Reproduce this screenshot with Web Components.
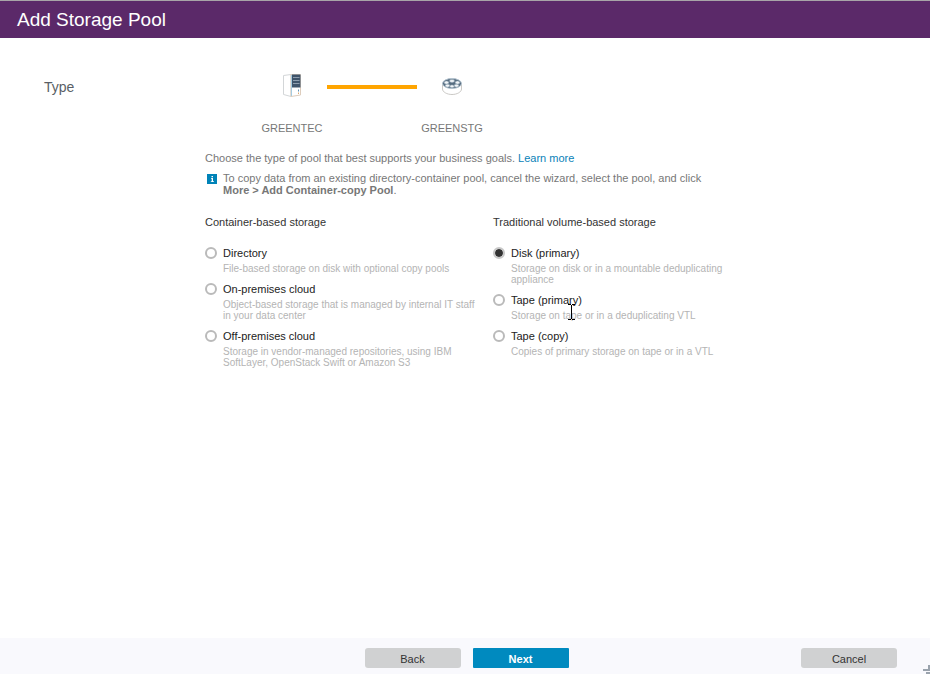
<!DOCTYPE html>
<html lang="en">
<head>
  <meta charset="utf-8">
  <meta name="viewport" content="width=device-width, initial-scale=1">
  <title>Add Storage Pool</title>
  <style>
    body {
      margin: 0;
      background: #fff;
      font-family: "Liberation Sans", Arial, sans-serif;
      font-size: 11px;
      line-height: 12px;
      color: #777;
    }
  </style>
</head>
<body>
  <wizard-dialog heading="Add Storage Pool" step="Type">
    <step-tracker>
      <tracker-node icon="server">GREENTEC</tracker-node>
      <tracker-line></tracker-line>
      <tracker-node icon="pool">GREENSTG</tracker-node>
    </step-tracker>
    <intro-text>Choose the type of pool that best supports your business goals. <help-link href="#learn">Learn more</help-link></intro-text>
    <info-note>To copy data from an existing directory-container pool, cancel the wizard, select the pool, and click <b>More &gt; Add Container-copy Pool</b>.</info-note>
    <pool-picker></pool-picker>
    <wizard-button slot="nav">Back</wizard-button>
    <wizard-button slot="nav" primary>Next</wizard-button>
    <wizard-button slot="end">Cancel</wizard-button>
  </wizard-dialog>
  <text-cursor></text-cursor>

  <script>
    class WizardDialog extends HTMLElement {

      constructor() {
        super();
        this.shadowDOM = this.attachShadow({ mode: 'open' });
      }

      connectedCallback() {
        this.render();
      }

      render() {
        this.shadowDOM.innerHTML = `
          <style>
          * {
            box-sizing: border-box;
          }

          :host {
            display: flex;
            flex-direction: column;
            min-height: 100vh;
          }

          header {
            padding: 8px 17px 7px;
            border-top: 1px solid #a8a4a8;
            background: #5b2969;
          }

          h1 {
            margin: 0;
            font-size: 19px;
            line-height: 22px;
            font-weight: 400;
            color: #fff;
          }

          main {
            flex: 1;
            display: grid;
            grid-template-columns: 161px minmax(0, 576px);
            align-content: start;
            padding: 34px 44px;
          }

          h2 {
            margin: 6px 0 0;
            font-size: 14px;
            line-height: 18px;
            font-weight: 400;
            color: #5a5f66;
          }

          footer {
            position: relative;
            display: grid;
            grid-template-columns: 1fr auto 1fr;
            align-items: center;
            padding: 10px 33px 6px 36px;
            background: #f9f9fd;
          }

          .nav {
            grid-column: 2;
            display: flex;
            gap: 12px;
          }

          .end {
            justify-self: end;
          }

          .grip {
            position: absolute;
            right: 0;
            bottom: 0;
          }
          </style>

          <header><h1>${this.getAttribute('heading')}</h1></header>
          <main>
            <h2>${this.getAttribute('step')}</h2>
            <section><slot></slot></section>
          </main>
          <footer>
            <div class="nav"><slot name="nav"></slot></div>
            <div class="end"><slot name="end"></slot></div>
            <svg class="grip" width="7" height="9" viewBox="0 0 7 9" fill="none" stroke="#9aa3ad" stroke-width="2">
              <path d="M0 5h6V0M3 8h4"/>
            </svg>
          </footer>
        `;
      }
    }

    class StepTracker extends HTMLElement {

      constructor() {
        super();
        this.shadowDOM = this.attachShadow({ mode: 'open' });
      }

      connectedCallback() {
        this.shadowDOM.innerHTML = `
          <style>
          :host {
            display: flex;
            align-items: flex-start;
            padding-left: 52px;
            margin-bottom: 18px;
          }
          </style>
          <slot></slot>
        `;
      }
    }

    const trackerIcons = {
      server: `
        <svg width="28" height="28" viewBox="0 0 28 28" fill="none">
          <path d="M5.500 3.500L13 2.500V24.500L5.500 22.500Z" fill="#fff" stroke="#d3d6d8"/>
          <path d="M13 2.500H22.500V23L13 24.500Z" fill="#fff" stroke="#decdbd"/>
          <path d="M13.500 3V24" stroke="#a5cbe0"/>
          <path d="M14 2.500H22.500V15.500H14Z" fill="#3f546b"/>
          <path d="M15 5.500h6.500M15 8.500h6.500M15 11.500h6.500" stroke="#8d9dae"/>
          <path d="M20.500 17.500v2" stroke="#5f91b5"/>
          <path d="M20.500 20.500v1.500" stroke="#dda970"/>
        </svg>`,
      pool: `
        <svg width="28" height="28" viewBox="0 0 28 28" fill="none">
          <path d="M4.500 12.500v4.500c0 3 4.500 5.500 9.500 5.500s9.500-2.500 9.500-5.500v-4.500" fill="#fff" stroke="#cbc9c6"/>
          <ellipse cx="14" cy="11.500" rx="9.500" ry="5" fill="#566c80" stroke="#b3c3cf"/>
          <g fill="#f1f5f8" stroke="#93a6b5" stroke-width=".5">
            <ellipse cx="8.500" cy="10.500" rx="2.300" ry="1.500"/>
            <ellipse cx="14" cy="9" rx="2.500" ry="1.400"/>
            <ellipse cx="19.500" cy="10.500" rx="2.300" ry="1.500"/>
            <ellipse cx="9.500" cy="13.700" rx="2.300" ry="1.400"/>
            <ellipse cx="14" cy="14.300" rx="2" ry="1.400"/>
            <ellipse cx="18.500" cy="13.700" rx="2.300" ry="1.400"/>
          </g>
        </svg>`
    };

    class TrackerNode extends HTMLElement {

      constructor() {
        super();
        this.shadowDOM = this.attachShadow({ mode: 'open' });
      }

      connectedCallback() {
        this.shadowDOM.innerHTML = `
          <style>
          :host {
            display: flex;
            flex-direction: column;
            align-items: center;
            gap: 22px;
            width: 70px;
          }

          svg {
            display: block;
          }
          </style>
          ${trackerIcons[this.getAttribute('icon')]}
          <span><slot></slot></span>
        `;
      }
    }

    class TrackerLine extends HTMLElement {

      constructor() {
        super();
        this.attachShadow({ mode: 'open' }).innerHTML = `
          <style>
          :host {
            display: block;
            width: 90px;
            height: 4px;
            margin-top: 13px;
            background: #ffa500;
          }
          </style>
        `;
      }
    }

    class IntroText extends HTMLElement {

      constructor() {
        super();
        this.attachShadow({ mode: 'open' }).innerHTML = `
          <style>
          :host {
            display: block;
            margin-bottom: 8px;
          }

          p {
            margin: 0;
          }
          </style>
          <p><slot></slot></p>
        `;
      }
    }

    class HelpLink extends HTMLElement {

      constructor() {
        super();
        this.shadowDOM = this.attachShadow({ mode: 'open' });
      }

      connectedCallback() {
        this.shadowDOM.innerHTML = `
          <style>
          a {
            color: #0a82b8;
            text-decoration: none;
          }

          a:hover {
            text-decoration: underline;
          }
          </style>
          <a href="${this.getAttribute('href')}"><slot></slot></a>
        `;
      }
    }

    class InfoNote extends HTMLElement {

      constructor() {
        super();
        this.attachShadow({ mode: 'open' }).innerHTML = `
          <style>
          :host {
            display: flex;
            align-items: flex-start;
            gap: 6px;
            max-width: 500px;
            padding-left: 2px;
            margin-bottom: 20px;
          }

          svg {
            flex: none;
            margin-top: 2px;
          }

          p {
            margin: 0;
          }
          </style>
          <svg width="10" height="10" viewBox="0 0 10 10">
            <path d="M0 0h10v10H0Z" fill="#0083b8"/>
            <path d="M4.500 2h1.500v1.200H4.500ZM4 4h2v3.200h1V8H3.800V7.200H4.700V4.800H4Z" fill="#fff"/>
          </svg>
          <p><slot></slot></p>
        `;
      }
    }

    const poolTypes = [
      {
        title: 'Container-based storage',
        options: [
          ['directory', 'Directory', 'File-based storage on disk with optional copy pools'],
          ['on-premises', 'On-premises cloud', 'Object-based storage that is managed by internal IT staff in your data center'],
          ['off-premises', 'Off-premises cloud', 'Storage in vendor-managed repositories, using IBM SoftLayer, OpenStack Swift or Amazon S3']
        ]
      },
      {
        title: 'Traditional volume-based storage',
        options: [
          ['disk', 'Disk (primary)', 'Storage on disk or in a mountable deduplicating appliance'],
          ['tape', 'Tape (primary)', 'Storage on tape or in a deduplicating VTL'],
          ['tape-copy', 'Tape (copy)', 'Copies of primary storage on tape or in a VTL']
        ]
      }
    ];

    // all radios live in one shadow root so that they form a single group
    class PoolPicker extends HTMLElement {

      constructor() {
        super();
        this.shadowDOM = this.attachShadow({ mode: 'open' });
        this.selected = 'disk';
      }

      connectedCallback() {
        this.render();
      }

      renderOption([id, name, text]) {
        return `
          <div class="option">
            <input type="radio" name="pool" id="${id}" aria-describedby="${id}-text" ${id === this.selected ? 'checked' : ''}>
            <label for="${id}">${name}</label>
            <p id="${id}-text">${text}</p>
          </div>
        `;
      }

      render() {
        this.shadowDOM.innerHTML = `
          <style>
          * {
            box-sizing: border-box;
          }

          :host {
            display: grid;
            grid-template-columns: 1fr 1fr;
          }

          h3 {
            margin: 0 0 18px;
            font-size: 11px;
            line-height: 12px;
            font-weight: 400;
            color: #333;
          }

          .options {
            display: grid;
            gap: 8px;
          }

          .option {
            display: grid;
            grid-template-columns: 12px minmax(0, 252px);
            column-gap: 6px;
            row-gap: 3px;
            align-items: center;
          }

          input {
            appearance: none;
            width: 12px;
            height: 12px;
            margin: 0;
            border: 2px solid #bababa;
            border-radius: 50%;
            background: #fff;
          }

          input:checked {
            border-color: #c8c8c8;
            background: #333 padding-box;
          }

          label {
            line-height: 14px;
            color: #222;
          }

          p {
            grid-column: 2;
            margin: 0;
            font-size: 10px;
            line-height: 11px;
            color: #b4b4b4;
          }
          </style>

          ${poolTypes.map(type => `
            <div role="radiogroup" aria-label="${type.title}">
              <h3>${type.title}</h3>
              <div class="options">${type.options.map(option => this.renderOption(option)).join('')}</div>
            </div>
          `).join('')}
        `;
      }
    }

    class WizardButton extends HTMLElement {

      constructor() {
        super();
        this.attachShadow({ mode: 'open' }).innerHTML = `
          <style>
          :host {
            display: block;
          }

          button {
            display: block;
            width: 96px;
            height: 20px;
            padding: 2px 0 0;
            border: 0;
            border-radius: 3px;
            background: #d0d1d2;
            font: inherit;
            color: #333;
          }

          :host([primary]) button {
            border-radius: 1px;
            background: #008abf;
            font-weight: bold;
            color: #fff;
          }
          </style>
          <button type="button"><slot></slot></button>
        `;
      }
    }

    class TextCursor extends HTMLElement {

      constructor() {
        super();
        this.attachShadow({ mode: 'open' }).innerHTML = `
          <style>
          :host {
            position: absolute;
            left: 568px;
            top: 304px;
            pointer-events: none;
          }

          svg {
            display: block;
          }
          </style>
          <svg width="7" height="16" viewBox="0 0 7 16" fill="none" stroke="#000">
            <path d="M0 .5h3M4 .5h3M3.500 1v14M0 15.500h3M4 15.500h3"/>
          </svg>
        `;
      }
    }

    customElements.define('wizard-dialog', WizardDialog);
    customElements.define('step-tracker', StepTracker);
    customElements.define('tracker-node', TrackerNode);
    customElements.define('tracker-line', TrackerLine);
    customElements.define('intro-text', IntroText);
    customElements.define('help-link', HelpLink);
    customElements.define('info-note', InfoNote);
    customElements.define('pool-picker', PoolPicker);
    customElements.define('wizard-button', WizardButton);
    customElements.define('text-cursor', TextCursor);
  </script>
</body>
</html>
